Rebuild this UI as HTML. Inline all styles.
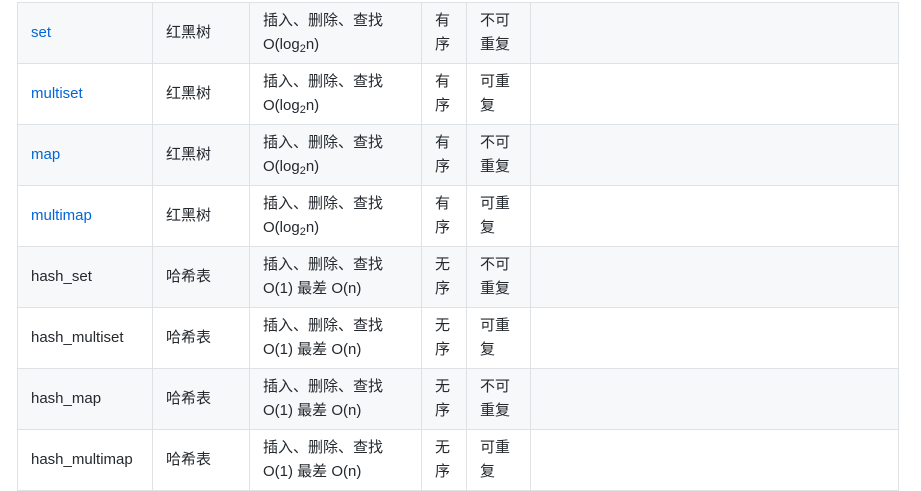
<!DOCTYPE html>
<html><head><meta charset="utf-8"><style>
html,body{margin:0;padding:0;background:#fff;width:921px;height:484px;overflow:hidden}
body{font-family:"Liberation Sans","Noto Sans CJK SC",sans-serif;font-size:15px;color:#24292e}
table{position:absolute;left:17px;top:2px;border-collapse:collapse;table-layout:fixed}
td{border:1px solid #dfe2e5;padding:0 13px;height:61px;line-height:24px;vertical-align:middle;box-sizing:border-box}
tr:nth-child(odd) td{background:#f6f8fa}
a{color:#0366d6;text-decoration:none}
sub{font-size:11px;line-height:0;vertical-align:-3px}
</style></head><body>
<table>
<colgroup><col style="width:135px"><col style="width:97px"><col style="width:172px"><col style="width:45px"><col style="width:64px"><col style="width:368px"></colgroup>
<tr><td><a>set</a></td><td>红黑树</td><td>插入、删除、查找<br>O(log<sub>2</sub>n)</td><td>有<br>序</td><td>不可<br>重复</td><td></td></tr>
<tr><td><a>multiset</a></td><td>红黑树</td><td>插入、删除、查找<br>O(log<sub>2</sub>n)</td><td>有<br>序</td><td>可重<br>复</td><td></td></tr>
<tr><td><a>map</a></td><td>红黑树</td><td>插入、删除、查找<br>O(log<sub>2</sub>n)</td><td>有<br>序</td><td>不可<br>重复</td><td></td></tr>
<tr><td><a>multimap</a></td><td>红黑树</td><td>插入、删除、查找<br>O(log<sub>2</sub>n)</td><td>有<br>序</td><td>可重<br>复</td><td></td></tr>
<tr><td>hash_set</td><td>哈希表</td><td>插入、删除、查找<br>O(1) 最差 O(n)</td><td>无<br>序</td><td>不可<br>重复</td><td></td></tr>
<tr><td>hash_multiset</td><td>哈希表</td><td>插入、删除、查找<br>O(1) 最差 O(n)</td><td>无<br>序</td><td>可重<br>复</td><td></td></tr>
<tr><td>hash_map</td><td>哈希表</td><td>插入、删除、查找<br>O(1) 最差 O(n)</td><td>无<br>序</td><td>不可<br>重复</td><td></td></tr>
<tr><td>hash_multimap</td><td>哈希表</td><td>插入、删除、查找<br>O(1) 最差 O(n)</td><td>无<br>序</td><td>可重<br>复</td><td></td></tr>
</table>
</body></html>
